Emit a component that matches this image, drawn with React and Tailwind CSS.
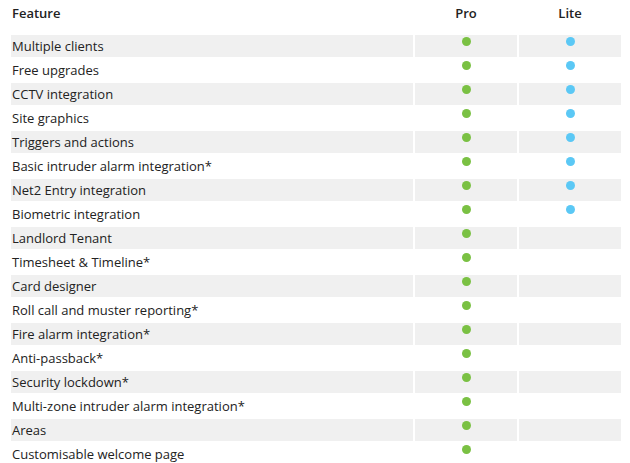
import React from "react";

const rows = [
  ["Multiple clients", true],
  ["Free upgrades", true],
  ["CCTV integration", true],
  ["Site graphics", true],
  ["Triggers and actions", true],
  ["Basic intruder alarm integration*", true],
  ["Net2 Entry integration", true],
  ["Biometric integration", true],
  ["Landlord Tenant", false],
  ["Timesheet & Timeline*", false],
  ["Card designer", false],
  ["Roll call and muster reporting*", false],
  ["Fire alarm integration*", false],
  ["Anti-passback*", false],
  ["Security lockdown*", false],
  ["Multi-zone intruder alarm integration*", false],
  ["Areas", false],
  ["Customisable welcome page", false],
];

export default function App() {
  return (
    <div className="w-[630px] h-[463px] overflow-hidden bg-white text-[13px] text-[#222]" style={{ fontFamily: '"Open Sans", sans-serif' }}>
      <div className="grid grid-cols-[402px_102px_102px] gap-[2px] pl-[11px] pt-[2px]">
        <div className="h-[31px] pl-[1px] pt-[2px] font-semibold leading-[18px]">Feature</div>
        <div className="h-[31px] pt-[2px] font-semibold leading-[18px] text-center">Pro</div>
        <div className="h-[31px] pt-[2px] font-semibold leading-[18px] text-center">Lite</div>
        {rows.map(([name, lite], i) => {
          const bg = i % 2 === 0 ? "bg-[#f0f0f0]" : "bg-white";
          return (
            <React.Fragment key={name}>
              <div className={`h-[22px] pl-[1px] leading-[22px] ${bg}`}>{name}</div>
              <div className={`h-[22px] flex justify-center pt-[2px] ${bg}`}>
                <div className="w-[9px] h-[9px] rounded-full bg-[#7ac143]" />
              </div>
              <div className={`h-[22px] flex justify-center pt-[2px] ${bg}`}>
                {lite && <div className="w-[9px] h-[9px] rounded-full bg-[#5bc8f5]" />}
              </div>
            </React.Fragment>
          );
        })}
      </div>
    </div>
  );
}
